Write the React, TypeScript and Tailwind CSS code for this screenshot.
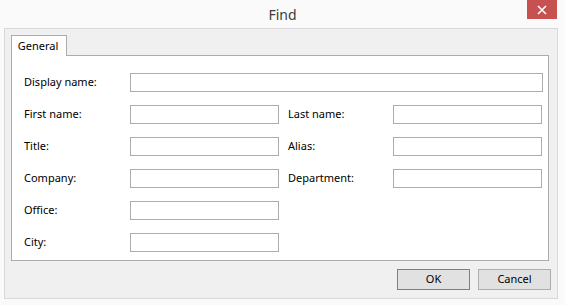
const labelCls = 'text-[11px] leading-[19px] text-black';
const inputCls = 'h-[19px] border border-[#abadb3] bg-white';

function Field({ label, wide }: { label: string; wide?: boolean }) {
  return (
    <div className="flex items-start">
      <span className={`${labelCls} w-[106px] -mt-[1px]`}>{label}</span>
      <div className={`${inputCls} ${wide ? 'w-[413px]' : 'w-[149px]'}`} />
    </div>
  );
}

function Pair({ left, right }: { left: string; right?: string }) {
  return (
    <div className="flex items-start">
      <span className={`${labelCls} w-[106px] -mt-[1px]`}>{left}</span>
      <div className={`${inputCls} w-[149px]`} />
      {right ? (
        <>
          <span className={`${labelCls} ml-[9px] w-[105px] -mt-[1px]`}>{right}</span>
          <div className={`${inputCls} w-[149px]`} />
        </>
      ) : null}
    </div>
  );
}

export default function App() {
  return (
    <div
      className="h-[305px] w-[565px] overflow-hidden bg-[#fafafa]"
      style={{ fontFamily: '"Noto Sans", "Open Sans", sans-serif' }}
    >
      {/* title bar */}
      <div className="relative flex h-[28px] items-center justify-center">
        <span className="text-[14px] text-[#3c3c3c]">Find</span>
        <button
          type="button"
          className="absolute right-[8px] top-0 flex h-[19px] w-[30px] items-center justify-center bg-[#c75050]"
        >
          <svg width="10" height="10" viewBox="0 0 10 10">
            <path d="M1 1L9 9M9 1L1 9" stroke="#fff" strokeWidth="1.6" />
          </svg>
        </button>
      </div>

      {/* client area */}
      <div className="ml-[4px] flex h-[271px] w-[554px] flex-col border border-[#d9d9d9] bg-[#f0f0f0]">
        <div className="ml-[6px] mt-[6px] flex">
          <div className="relative z-10 -mb-px flex h-[21px] w-[56px] items-center justify-center border border-b-0 border-[#acacac] bg-white pr-[2px] text-[11px] text-black">
            General
          </div>
        </div>
        <div className="ml-[6px] flex h-[206px] w-[538px] flex-col gap-[13px] border border-[#acacac] bg-white pl-[12px] pt-[17px]">
          <Field label="Display name:" wide />
          <Pair left="First name:" right="Last name:" />
          <Pair left="Title:" right="Alias:" />
          <Pair left="Company:" right="Department:" />
          <Pair left="Office:" />
          <Pair left="City:" />
        </div>
        <div className="mr-[6px] mt-[8px] flex justify-end gap-[8px]">
          <button
            type="button"
            className="h-[21px] w-[73px] border border-[#3c8fdb] bg-[#e1e1e1] text-[11px] text-black"
          >
            OK
          </button>
          <button
            type="button"
            className="h-[21px] w-[73px] border border-[#adadad] bg-[#e1e1e1] text-[11px] text-black"
          >
            Cancel
          </button>
        </div>
      </div>
    </div>
  );
}
